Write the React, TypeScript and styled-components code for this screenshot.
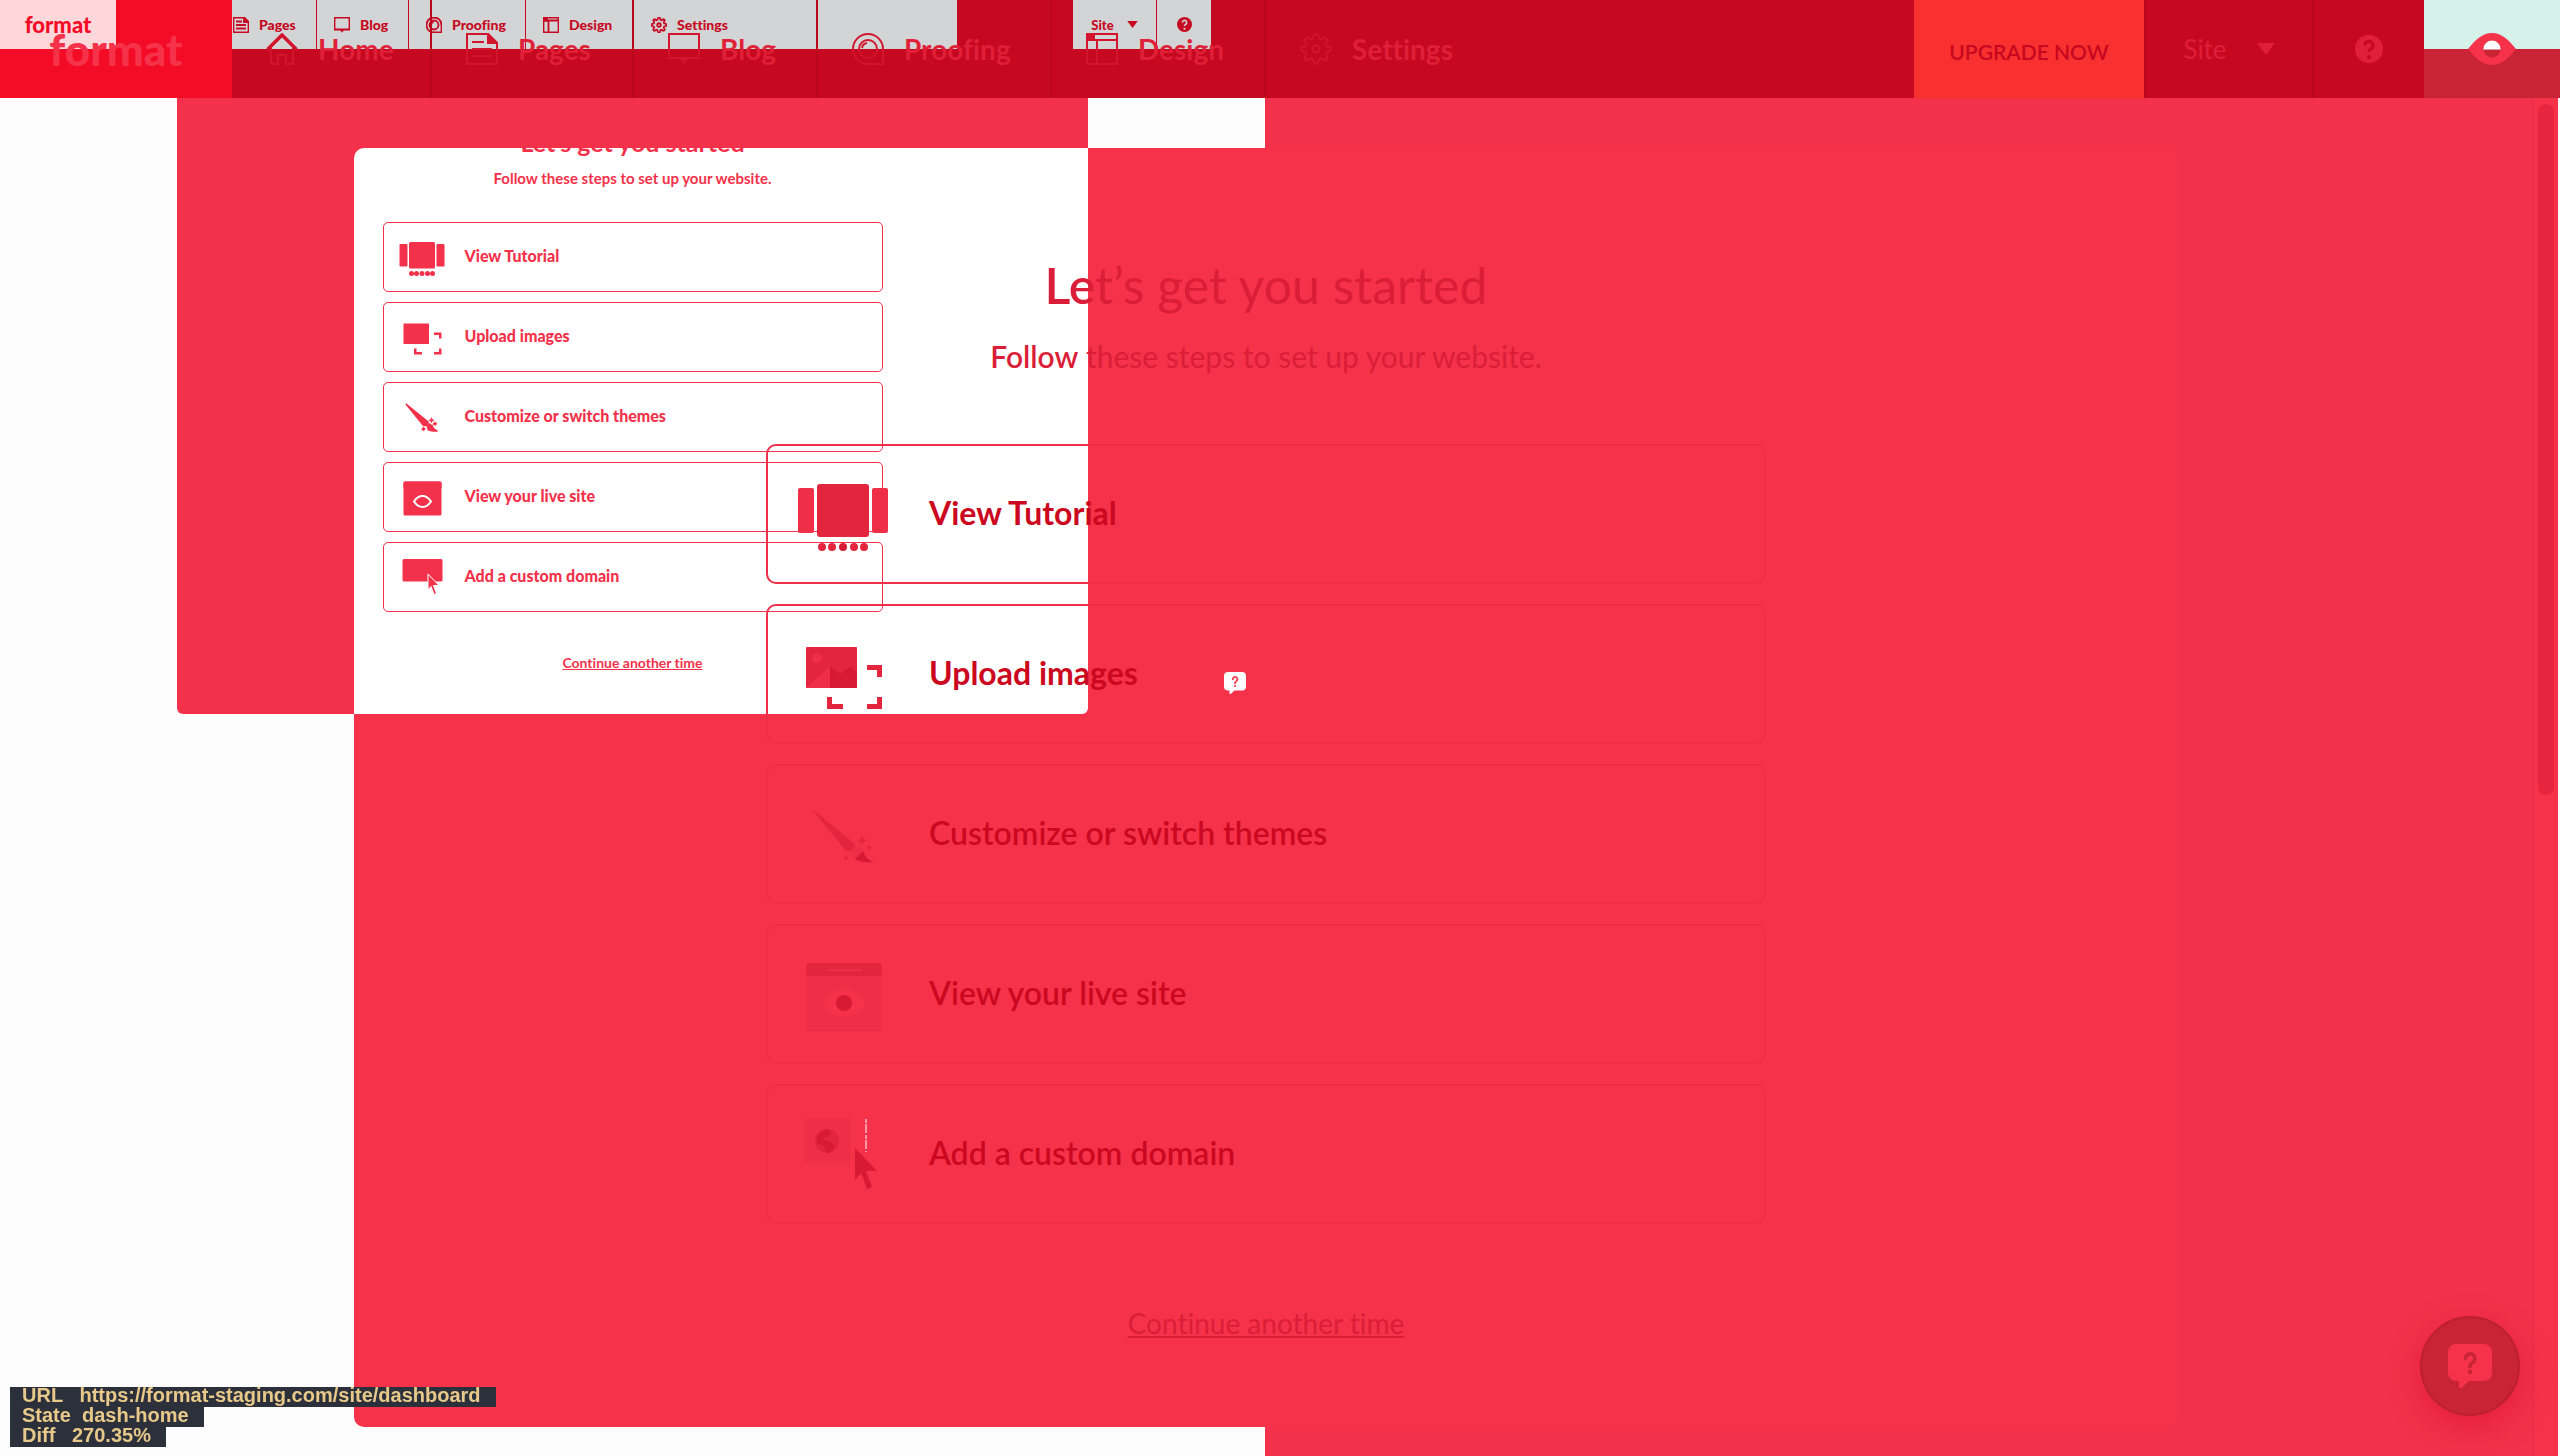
import React from 'react';
import styled, { createGlobalStyle } from 'styled-components';

const c = {
  red: '#f5324a',
  redPage: '#f3314a',
  line: '#ef2e48',
  mid: '#e3263e',
  deep: '#d81a35',
  text: '#cb0820',
  nav: '#c60820',
  navLine: '#bd071d',
  navText: '#e01f38',
  navIcon: '#d2142c',
  logo: '#f40c26',
  gray: '#d3d4d6',
  paper: '#fcfcfc',
};

const Global = createGlobalStyle`
  *, *::before, *::after { box-sizing: border-box; }
  body { margin: 0; font-family: Lato, "Open Sans", sans-serif; font-variant-ligatures: none; }
  button { font: inherit; font-variant-ligatures: none; border: 0; background: none; padding: 0; margin: 0; cursor: pointer; }
  a { color: inherit; text-decoration: none; }
  h1, h2, p, ul { margin: 0; padding: 0; }
  li { list-style: none; }
  svg { display: block; flex: none; }
`;

const Page = styled.div`
  position: relative;
  display: flex;
  flex-direction: column;
  min-height: 100vh;
  background: linear-gradient(to right, ${c.paper} calc(50% - 15px), ${c.redPage} 0);
`;

/* ---------- header ---------- */
const Header = styled.header`
  position: relative;
  display: flex;
  height: 98px;
  background: ${c.nav};
`;
const Logo = styled.a`
  display: flex;
  justify-content: center;
  align-items: center;
  width: 232px;
  color: ${c.red};
  font-size: 44px;
  line-height: 48px;
  font-weight: 900;
  z-index: 2;
`;
const Nav = styled.nav`
  display: flex;
  flex: 1;
  z-index: 2;
`;
const NavItem = styled.a<{ $w: number }>`
  display: flex;
  align-items: center;
  gap: 20px;
  width: ${(p) => p.$w}px;
  padding-left: 34px;
  border-right: ${(p) => (p.$w === 220 ? 0 : 2)}px solid ${c.navLine};
  color: ${c.navText};
  font-size: 28px;
  line-height: 32px;
  font-weight: 700;
  svg { color: ${c.navIcon}; }
`;
const Upgrade = styled.button`
  width: 230px;
  padding-top: 4px;
  background: #f8302f;
  color: ${c.nav};
  font-size: 21px;
  font-weight: 600;
  z-index: 2;
`;
const SiteButton = styled.button`
  display: flex;
  align-items: center;
  justify-content: center;
  gap: 30px;
  width: 170px;
  border-right: 2px solid ${c.navLine};
  border-left: 2px solid ${c.navLine};
  color: ${c.navText};
  font-size: 26px;
  z-index: 2;
`;
const HelpButton = styled.button`
  display: flex;
  align-items: center;
  justify-content: center;
  width: 110px;
  color: ${c.navText};
  z-index: 2;
`;
const Preview = styled.button`
  display: flex;
  align-items: center;
  justify-content: center;
  width: 136px;
  background: linear-gradient(#d5f1e9 50%, #c82435 0);
`;

/* Half-scale header of the 1x capture, laid over the 2x one */
const MiniHeader = styled.div`
  position: absolute;
  inset: 0 50% auto 0;
  display: flex;
  height: 49px;
  z-index: 1;
`;
const LogoBack = styled.div`
  position: absolute;
  inset: 0 auto 0 0;
  width: 232px;
  background: ${c.logo};
`;
const MiniLogo = styled.a`
  display: flex;
  justify-content: center;
  align-items: center;
  width: 116px;
  margin-right: 116px;
  background: #fed7db;
  color: ${c.logo};
  font-size: 22px;
  font-weight: 900;
`;
const MiniNav = styled.nav`
  display: flex;
  width: 725px;
  margin-right: 116px;
  background: ${c.gray};
`;
const MiniItem = styled.a<{ $w: number; $first?: boolean }>`
  display: flex;
  align-items: center;
  gap: 10px;
  width: ${(p) => p.$w}px;
  padding-left: ${(p) => (p.$first ? 1 : 17)}px;
  border-right: 1px solid ${c.nav};
  color: ${c.nav};
  font-size: 14px;
  font-weight: 900;
  &:last-child { border-right: 0; }
`;
const MiniTool = styled.button<{ $w: number }>`
  display: flex;
  align-items: center;
  justify-content: center;
  gap: 13px;
  width: ${(p) => p.$w}px;
  background: ${c.gray};
  border-right: ${(p) => (p.$w > 60 ? 1 : 0)}px solid ${c.nav};
  color: ${c.nav};
  font-size: 13px;
  font-weight: 900;
`;

/* ---------- body ---------- */
const Main = styled.main`
  flex: 1;
  display: flex;
`;
const Body = styled.div`
  flex: 1;
  padding: 50px 354px 29px;
`;
const Modal = styled.section`
  padding: 109px 0 84px;
  border-radius: 10px;
  background: ${c.red};
`;
const Content = styled.div`
  position: relative;
  z-index: 2;
  display: flex;
  flex-direction: column;
  align-items: center;
`;
const Title = styled.h1`
  color: #db1e38;
  font-size: 50px;
  line-height: 56px;
  font-weight: 400;
`;
const Lead = styled.p`
  margin-top: 23px;
  color: #db1e38;
  font-size: 30px;
  line-height: 40px;
`;
const Strong = styled.span`
  font-weight: 600;
`;
const List = styled.ul`
  display: grid;
  gap: 20px;
  width: 1000px;
  max-width: 100%;
  margin-top: 68px;
`;
const Card = styled.button<{ $bold?: boolean }>`
  display: flex;
  align-items: center;
  gap: 26px;
  width: 100%;
  height: 140px;
  padding-left: 15px;
  border: 2px solid ${c.line};
  border-radius: 10px;
  color: ${c.text};
  font-size: 32px;
  font-weight: ${(p) => (p.$bold ? 700 : 600)};
`;
const CardLabel = styled.span`
  padding-bottom: 3px;
`;
const Later = styled.a`
  margin-top: 79px;
  color: #db1e38;
  font-size: 28px;
  line-height: 40px;
  text-decoration: underline;
  text-decoration-thickness: 2px;
  text-decoration-skip-ink: none;
  text-underline-offset: 2px;
`;

const MiniModal = styled.section`
  position: absolute;
  top: 98px;
  left: 177px;
  width: calc(50% - 369px);
  padding: 30px 0 41px;
  border-radius: 0 0 6px 6px;
  background: ${c.redPage};
  z-index: 1;
`;
const Overlap = styled.div`
  position: absolute;
  inset: 50px 0 0 177px;
  border-radius: 10px 0 6px 0;
  background: #fff;
`;
const MiniContent = styled.div`
  position: relative;
  display: flex;
  flex-direction: column;
  align-items: center;
  color: ${c.redPage};
`;
const MiniTitle = styled.h2`
  font-size: 25px;
  line-height: 28px;
  font-weight: 700;
`;
const MiniLead = styled.p`
  margin-top: 12px;
  font-size: 15px;
  line-height: 20px;
  font-weight: 700;
`;
const MiniList = styled.ul`
  display: grid;
  gap: 10px;
  width: 500px;
  margin-top: 34px;
`;
const MiniCard = styled.button`
  display: flex;
  align-items: center;
  gap: 13px;
  width: 100%;
  height: 70px;
  padding-left: 8px;
  border: 1px solid ${c.redPage};
  border-radius: 5px;
  color: ${c.redPage};
  font-size: 16px;
  font-weight: 900;
`;
const MiniLater = styled.a`
  margin-top: 41px;
  font-size: 14px;
  line-height: 20px;
  font-weight: 700;
  text-decoration: underline;
  text-decoration-thickness: 1px;
  text-decoration-skip-ink: none;
  text-underline-offset: 1px;
`;

const Track = styled.div`
  width: 28px;
  padding: 6px 0 0 4px;
  border-left: 2px solid ${c.line};
  border-right: 2px solid ${c.paper};
  background: ${c.red};
`;
const Thumb = styled.div`
  width: 16px;
  height: 691px;
  border-radius: 8px;
  background: #e8253f;
`;
const Chat = styled.button`
  position: fixed;
  right: 40px;
  bottom: 40px;
  display: flex;
  align-items: center;
  justify-content: center;
  width: 100px;
  height: 100px;
  border: 2px solid #bc2030;
  border-radius: 50%;
  background: #c82435;
  box-shadow: 0 10px 28px rgba(214, 14, 44, 0.5);
  z-index: 3;
`;
const MiniChat = styled.button`
  position: absolute;
  top: 672px;
  left: calc(50% - 56px);
  z-index: 3;
`;
const Report = styled.div`
  position: fixed;
  left: 10px;
  bottom: 9px;
  display: flex;
  flex-direction: column;
  align-items: flex-start;
  z-index: 4;
`;
const ReportLine = styled.p`
  height: 20px;
  padding: 0 15px 0 12px;
  background: #2c303b;
  color: #e8c98a;
  font-family: "Liberation Sans", Arial, sans-serif;
  font-size: 20px;
  line-height: 16px;
  font-weight: 700;
  white-space: pre;
`;

/* ---------- icons ---------- */
type NavKind = 'home' | 'pages' | 'blog' | 'proofing' | 'design' | 'settings';
const gearPath = () => {
  const pts: string[] = [];
  for (let i = 0; i < 64; i++) {
    const a = (i / 64) * Math.PI * 2 - Math.PI / 2;
    const r = 12.8 + 2.2 * Math.tanh(2 * Math.cos(8 * (a + Math.PI / 2)));
    pts.push(`${(16 + r * Math.cos(a)).toFixed(2)} ${(16 + r * Math.sin(a)).toFixed(2)}`);
  }
  return `M${pts.join('L')}Z`;
};

const NavIcon = ({ kind, size = 32 }: { kind: NavKind; size?: number }) => {
  const sw = size < 20 ? 3.6 : 2;
  return (
    <svg width={size} height={size} viewBox="0 0 32 32" fill="none" stroke="currentColor" strokeWidth={sw} aria-hidden="true">
      {kind === 'home' && (
        <>
          <path d="M1.500 16.500L16 2l14.500 14.500" strokeWidth="3.500" />
          <path d="M5 15v16h7v-9h8v9h7V15" />
        </>
      )}
      {kind === 'pages' && (
        <>
          <path d="M1 1h21l9 9v21H1z" />
          <path d="M22 1v9h9z" fill="currentColor" />
          <path d="M6 9h12M6 16h20M6 23h20" />
        </>
      )}
      {kind === 'blog' && (
        <>
          <path d="M1 1h30v24H1z" />
          <path d="M11 25h10l-5 6z" fill="currentColor" stroke="none" />
        </>
      )}
      {kind === 'proofing' && (
        <>
          <path d="M31 31H16A15 15 0 1 1 31 16z" />
          <circle cx="16" cy="16" r="9" />
          <path d="M10 15a6 6 0 0 1 5-5" />
        </>
      )}
      {kind === 'design' && (
        <>
          <path d="M1 1h30v30H1zM1 7h30M11 7v24" />
          <path d="M1 1h7v6H1z" fill="currentColor" />
        </>
      )}
      {kind === 'settings' && (
        <>
          <path d={gearPath()} />
          <circle cx="16" cy="16" r="3.500" />
        </>
      )}
    </svg>
  );
};

const Caret = ({ w, h }: { w: number; h: number }) => (
  <svg width={w} height={h} viewBox="0 0 18 12" fill="currentColor" aria-hidden="true">
    <path d="M0 0h18L9 12z" />
  </svg>
);
const Help = ({ size, hole }: { size: number; hole: string }) => (
  <svg width={size} height={size} viewBox="0 0 28 28" fill="none" aria-hidden="true">
    <circle cx="14" cy="14" r="14" fill="currentColor" />
    <path d="M10 10.500a4 4 0 1 1 6 3.300c-1.500.9-2 1.500-2 3.200" stroke={hole} strokeWidth="3" />
    <circle cx="14" cy="22" r="2" fill={hole} />
  </svg>
);
const Eye = () => (
  <svg width="48" height="32" viewBox="0 0 48 32" aria-hidden="true">
    <path
      fillRule="evenodd"
      fill={c.red}
      d="M0 16C8 6 15 0 24 0s16 6 24 16c-8 10-15 16-24 16S8 26 0 16zM24 7.500a8.500 8.500 0 1 0 0 17 8.500 8.500 0 0 0 0-17z"
    />
    <path d="M15.500 16.500a8.500 8.500 0 0 1 17 0z" fill="#fff" />
  </svg>
);
const Bubble = ({ size, fill, mark }: { size: number; fill: string; mark: string }) => (
  <svg width={size} height={size} viewBox="0 0 44 44" fill="none" aria-hidden="true">
    <path d="M8 0h28a8 8 0 0 1 8 8v21a8 8 0 0 1-8 8H21l-7 6.500q-3 1.500-3-1V37H8a8 8 0 0 1-8-8V8a8 8 0 0 1 8-8z" fill={fill} />
    <path d="M17.500 14.500a4.700 4.700 0 1 1 7 4.200c-2 1.100-2.500 1.800-2.500 4" stroke={mark} strokeWidth="3.500" strokeLinecap="round" />
    <circle cx="22" cy="28" r="2.200" fill={mark} />
  </svg>
);

type StepKind = 'tutorial' | 'upload' | 'themes' | 'live' | 'domain';
const StepIcon = ({ kind, flat }: { kind: StepKind; flat?: boolean }) => {
  const light = flat ? c.redPage : c.line;
  const mid = flat ? c.redPage : c.mid;
  const dark = flat ? c.redPage : c.deep;
  return (
    <svg width={flat ? 60 : 120} height={flat ? 50 : 100} viewBox="0 0 120 100" fill="none" aria-hidden="true">
      {kind === 'tutorial' && (
        <>
          <rect x="15" y="24" width="16" height="45" rx="2" fill={light} />
          <rect x="89" y="24" width="16" height="45" rx="2" fill={light} />
          <rect x="34" y="20" width="52" height="53" rx="3" fill={mid} />
          {[39, 49, 60, 71, 81].map((x) => (
            <circle key={x} cx={x} cy="83" r={flat ? 5 : 4} fill={x === 60 ? dark : mid} />
          ))}
        </>
      )}
      {kind === 'upload' && (
        <>
          <rect x="23" y="23" width="51" height="41" rx="1" fill={mid} />
          <circle cx="34" cy="34" r="5" fill={light} />
          <path d="M23 64l24-22v22z" fill={light} />
          <path d="M47 42l10 8 10-7 7 5v16H47z" fill={dark} />
          <path d="M84 43.500h12.500V53M96.500 73v9.500H84M46.500 73v9.500H60" stroke={mid} strokeWidth="5" />
        </>
      )}
      {kind === 'themes' && (
        <>
          <path d="M28 24L72 60q1 6-5 7h-4z" fill={mid} stroke={flat ? mid : 'none'} strokeWidth="3" />
          <path d="M69 68l6-6 6 5-7 8q-5-1-5-7z" fill={light} />
          <path d="M72 75l8-8q3 9 11 11-14 1-19-3z" fill={dark} stroke={flat ? dark : 'none'} strokeWidth="3" />
          <path d="M79 51l1.500 4 4 1.500-4 1.500-1.500 4-1.500-4-4-1.500 4-1.500z" fill={mid} stroke={flat ? mid : 'none'} />
          <path d="M86 61l2.500 2.500L86 66l-2.500-2.500zM63 71.500l2.500 2.500-2.500 2.500-2.500-2.500z" fill={mid} stroke={flat ? mid : 'none'} strokeWidth="3" />
        </>
      )}
      {kind === 'live' && (
        <>
          <rect x="23" y="19" width="76" height="68" rx="3" fill={light} />
          <path d="M26 19h70q3 0 3 3v10H23V22q0-3 3-3z" fill={mid} />
          {!flat && <path d="M44 26h35" stroke={c.line} strokeWidth="2" />}
          {flat ? (
            <path
              d="M44 59c6-9 11-11 17-11s11 2 17 11c-6 9-11 11-17 11s-11-2-17-11z"
              stroke="#fff"
              strokeWidth="4"
            />
          ) : (
            <path d="M40 59c7-10 13-14 21-14s15 4 22 14c-7 10-14 14-22 14s-14-4-21-14z" fill={c.red} />
          )}
          <circle cx="61" cy="59" r="8" fill={dark} />
        </>
      )}
      {kind === 'domain' && (
        <>
          <rect x="21" y="14" width={flat ? 80 : 47} height="45" rx="3" fill={light} />
          {!flat && (
            <>
              <circle cx="44" cy="37" r="12" fill={c.mid} />
              <path d="M45 25q5 4 0 8-5-1-5 3 9 1 11 6-1 5-5 7-5 0-4-5-1-4-8-4-2-12 11-15z" fill={c.deep} />
              <path d="M83 15v33" stroke="#fff" strokeDasharray="4 1 9 2" />
            </>
          )}
          <path
            d="M72 44l22 23H83l6 16-5 2-6-16-6 7z"
            fill={dark}
            stroke={flat ? '#fff' : 'none'}
            strokeWidth={flat ? 2 : 0}
          />
        </>
      )}
    </svg>
  );
};

const navItems: { kind: NavKind; label: string; w: number }[] = [
  { kind: 'home', label: 'Home', w: 200 },
  { kind: 'pages', label: 'Pages', w: 202 },
  { kind: 'blog', label: 'Blog', w: 184 },
  { kind: 'proofing', label: 'Proofing', w: 234 },
  { kind: 'design', label: 'Design', w: 214 },
  { kind: 'settings', label: 'Settings', w: 220 },
];
const miniWidths = [0, 85, 92, 117, 108, 184];

const steps: { kind: StepKind; label: string }[] = [
  { kind: 'tutorial', label: 'View Tutorial' },
  { kind: 'upload', label: 'Upload images' },
  { kind: 'themes', label: 'Customize or switch themes' },
  { kind: 'live', label: 'View your live site' },
  { kind: 'domain', label: 'Add a custom domain' },
];

export default function App() {
  return (
    <Page>
      <Global />
      <Header>
        <LogoBack />
        <MiniHeader>
          <MiniLogo href="#">format</MiniLogo>
          <MiniNav>
            {navItems.slice(1).map((n, i) => (
              <MiniItem key={n.kind} href="#" $w={miniWidths[i + 1]} $first={i === 0}>
                <NavIcon kind={n.kind} size={16} />
                {n.label}
              </MiniItem>
            ))}
          </MiniNav>
          <MiniTool $w={84}>
            Site
            <Caret w={11} h={7} />
          </MiniTool>
          <MiniTool $w={54} aria-label="Help">
            <Help size={15} hole={c.gray} />
          </MiniTool>
        </MiniHeader>
        <Logo href="#">format</Logo>
        <Nav>
          {navItems.map((n) => (
            <NavItem key={n.kind} href="#" $w={n.w}>
              <NavIcon kind={n.kind} />
              {n.label}
            </NavItem>
          ))}
        </Nav>
        <Upgrade>UPGRADE NOW</Upgrade>
        <SiteButton>
          Site
          <Caret w={18} h={12} />
        </SiteButton>
        <HelpButton aria-label="Help">
          <Help size={28} hole={c.nav} />
        </HelpButton>
        <Preview aria-label="Preview site">
          <Eye />
        </Preview>
      </Header>

      <Main>
        <Body>
          <Modal>
            <Content>
              <Title>
                <Strong>Le</Strong>t’s get you started
              </Title>
              <Lead>
                <Strong>Follow</Strong> these steps to set up your website.
              </Lead>
              <List>
                {steps.map((s, i) => (
                  <li key={s.kind}>
                    <Card $bold={i < 2}>
                      <StepIcon kind={s.kind} />
                      <CardLabel>{s.label}</CardLabel>
                    </Card>
                  </li>
                ))}
              </List>
              <Later href="#">Continue another time</Later>
            </Content>
          </Modal>
        </Body>
        <Track>
          <Thumb />
        </Track>
      </Main>

      <MiniModal>
        <Overlap />
        <MiniContent>
          <MiniTitle>Let’s get you started</MiniTitle>
          <MiniLead>Follow these steps to set up your website.</MiniLead>
          <MiniList>
            {steps.map((s) => (
              <li key={s.kind}>
                <MiniCard>
                  <StepIcon kind={s.kind} flat />
                  <CardLabel>{s.label}</CardLabel>
                </MiniCard>
              </li>
            ))}
          </MiniList>
          <MiniLater href="#">Continue another time</MiniLater>
        </MiniContent>
      </MiniModal>

      <MiniChat aria-label="Open chat">
        <Bubble size={22} fill="#fff" mark={c.red} />
      </MiniChat>
      <Chat aria-label="Open chat">
        <Bubble size={44} fill={c.red} mark="#c82435" />
      </Chat>

      <Report>
        <ReportLine>{'URL   https://format-staging.com/site/dashboard'}</ReportLine>
        <ReportLine>{'State  dash-home'}</ReportLine>
        <ReportLine>{'Diff   270.35%'}</ReportLine>
      </Report>
    </Page>
  );
}
